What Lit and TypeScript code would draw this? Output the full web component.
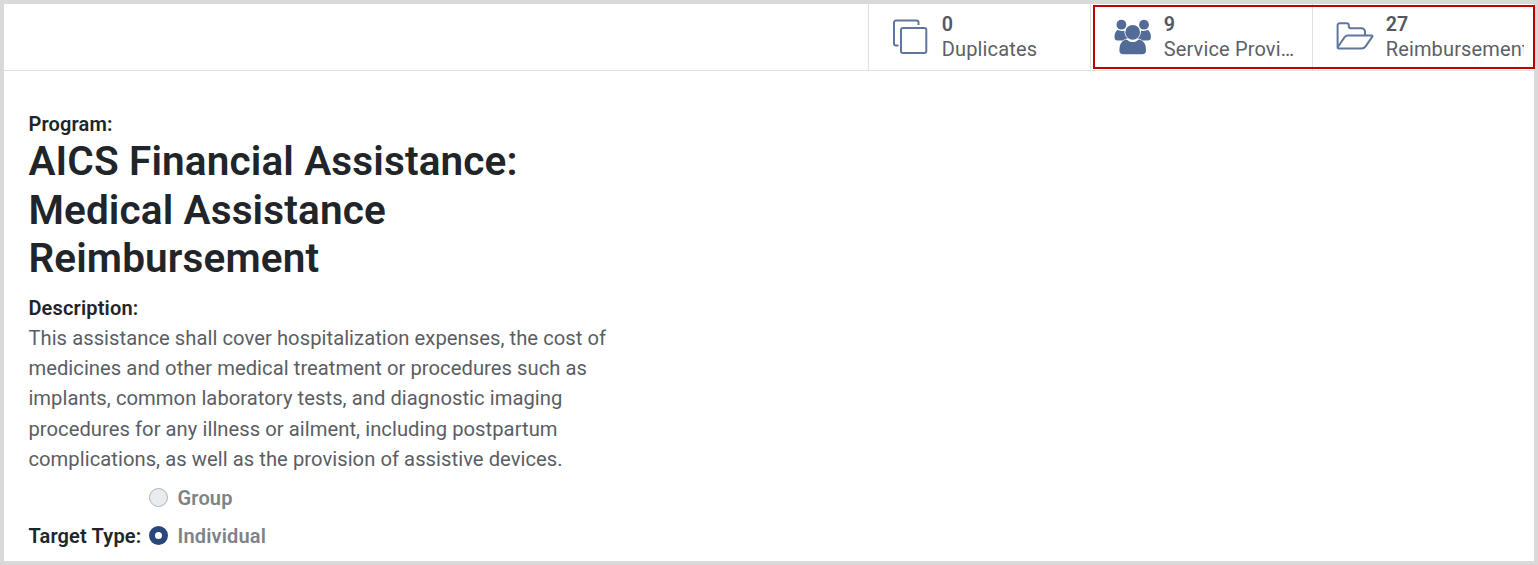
import { LitElement, html, css, svg } from "lit";
import { customElement, state } from "lit/decorators.js";

const copyIcon = svg`<svg class="icon" width="40" height="40" viewBox="0 0 40 40" fill="none" stroke="#5f779f" stroke-width="2">
  <path d="M27.500 8V5.600a2 2 0 0 0-2-2H5a2 2 0 0 0-2 2V26.500a2 2 0 0 0 2 2H7.500"/>
  <rect x="10" y="11" width="25.300" height="25" rx="2"/></svg>`;

const peopleIcon = svg`<svg class="icon" width="40" height="40" viewBox="0 0 40 40" fill="#536c97">
  <circle cx="8.400" cy="7.700" r="4.900"/><circle cx="31" cy="7.700" r="4.900"/>
  <path d="M3.800 13.500C4.600 12.800 5.500 13.200 6.500 13.600Q9.500 14.500 11.300 13.400Q11.300 18.600 14.800 21.300Q12 21.800 9.800 23.500H4.600Q1.500 23.500 1.500 20.300Q1.500 15.500 3.800 13.500Z"/>
  <path d="M35.600 13.500C34.800 12.800 33.900 13.200 32.900 13.600Q29.900 14.500 28.100 13.400Q28.100 18.600 24.600 21.300Q27.400 21.800 29.600 23.500H34.800Q37.900 23.500 37.900 20.300Q37.900 15.500 35.600 13.500Z"/>
  <circle cx="19.700" cy="15.300" r="7.400"/>
  <path d="M12 22.800C13.300 22 14.500 23.400 16 24.200Q19.700 26 23.400 24.200C24.900 23.400 26.100 22 27.400 22.800Q33 25 33 33.500Q33 37.300 29 37.300H10.500Q6.400 37.300 6.400 33.500Q6.400 25 12 22.800Z"/></svg>`;

const folderIcon = svg`<svg class="icon" width="40" height="40" viewBox="0 0 40 40" fill="none" stroke="#5f779f" stroke-width="2" stroke-linejoin="round">
  <path d="M2.600 30.500V8.300a2 2 0 0 1 2-2H11.800a2 2 0 0 1 2 2V9.300a2 2 0 0 0 2 2H26.500a3.500 3.500 0 0 1 3.500 3.500V18"/>
  <path d="M13 18.400H36.800Q38 18.800 37 20.200L30.600 29.300Q29 31.500 26.500 31.500H3.700Q2 31.300 3.100 29.600L9.500 20.300Q10.800 18.400 13 18.400Z"/></svg>`;

@customElement("app-root")
export class AppRoot extends LitElement {
  static styles = css`
    :host { display: block; font-family: Roboto, "Liberation Sans", sans-serif; }
    * { box-sizing: border-box; }
    .frame { position: relative; height: 565px; border: 4px solid #d9d9d9; background: #fff; }
    .bar { display: flex; justify-content: flex-end; height: 67px; border-bottom: 1px solid #dee2e6; }
    .stat { display: flex; width: 222px; border-left: 1px solid #dee2e6; padding: 13px 0 0 22px; color: #5c6066; }
    .icon { display: block; flex: none; }
    .words { margin-left: 10.700px; width: 132px; min-width: 0; margin-top: -5px; }
    .last .words { width: 138px; }
    .count { font-size: 19.700px; line-height: 26px; font-weight: 600; color: #54585e; }
    .label { font-size: 20px; line-height: 22px; padding-bottom: 2px; letter-spacing: .15px; white-space: nowrap; overflow: hidden; text-overflow: ellipsis; }
    .last .label { text-overflow: clip; }
    .mark { position: absolute; left: 1089px; top: 1px; width: 442px; height: 64px; border: 2px solid #c00000; }
    .body { padding: 38px 24.400px 0; color: #212529; }
    .key { font-size: 20px; line-height: 30px; letter-spacing: .17px; font-weight: 600; white-space: nowrap; }
    h1 { margin: -2px 0 0; font-size: 40.500px; line-height: 48.500px; letter-spacing: .14px; font-weight: 600; white-space: nowrap; }
    .desc-key { margin-top: 10px; }
    .desc { font-size: 20.200px; line-height: 30.400px; letter-spacing: .05px; color: #5a5e64; white-space: nowrap; }
    .targets { display: grid; grid-template-columns: 120.600px 28.500px auto; row-gap: 8px; margin-top: 8px; align-items: center; justify-content: start; }
    .radio { width: 19px; height: 19px; border-radius: 50%; background: #e9ecef; border: 1px solid #adb5bd; }
    .radio.on { border: 6px solid #29477b; background: #fff; }
    .option { color: #7d8388; }
  `;

  @state() private target = "Individual";

  private lines = [
    "This assistance shall cover hospitalization expenses, the cost of",
    "medicines and other medical treatment or procedures such as",
    "implants, common laboratory tests, and diagnostic imaging",
    "procedures for any illness or ailment, including postpartum",
    "complications, as well as the provision of assistive devices.",
  ];

  render() {
    return html`<div class="frame">
      <div class="bar">
        <div class="stat">${copyIcon}<div class="words"><div class="count">0</div><div class="label">Duplicates</div></div></div>
        <div class="stat">${peopleIcon}<div class="words"><div class="count">9</div><div class="label">Service Providers</div></div></div>
        <div class="stat last">${folderIcon}<div class="words"><div class="count">27</div><div class="label">Reimbursements</div></div></div>
      </div>
      <div class="mark"></div>
      <div class="body">
        <div class="key">Program:</div>
        <h1>AICS Financial Assistance:<br>Medical Assistance<br>Reimbursement</h1>
        <div class="key desc-key">Description:</div>
        <div class="desc">${this.lines.map((l) => html`<div>${l}</div>`)}</div>
        <div class="targets">
          ${["Group", "Individual"].map((o, i) => html`
            <span class="key">${i ? "Target Type:" : ""}</span>
            <span class="radio ${o === this.target ? "on" : ""}" @click=${() => (this.target = o)}></span>
            <span class="key option">${o}</span>`)}
        </div>
      </div>
    </div>`;
  }
}
